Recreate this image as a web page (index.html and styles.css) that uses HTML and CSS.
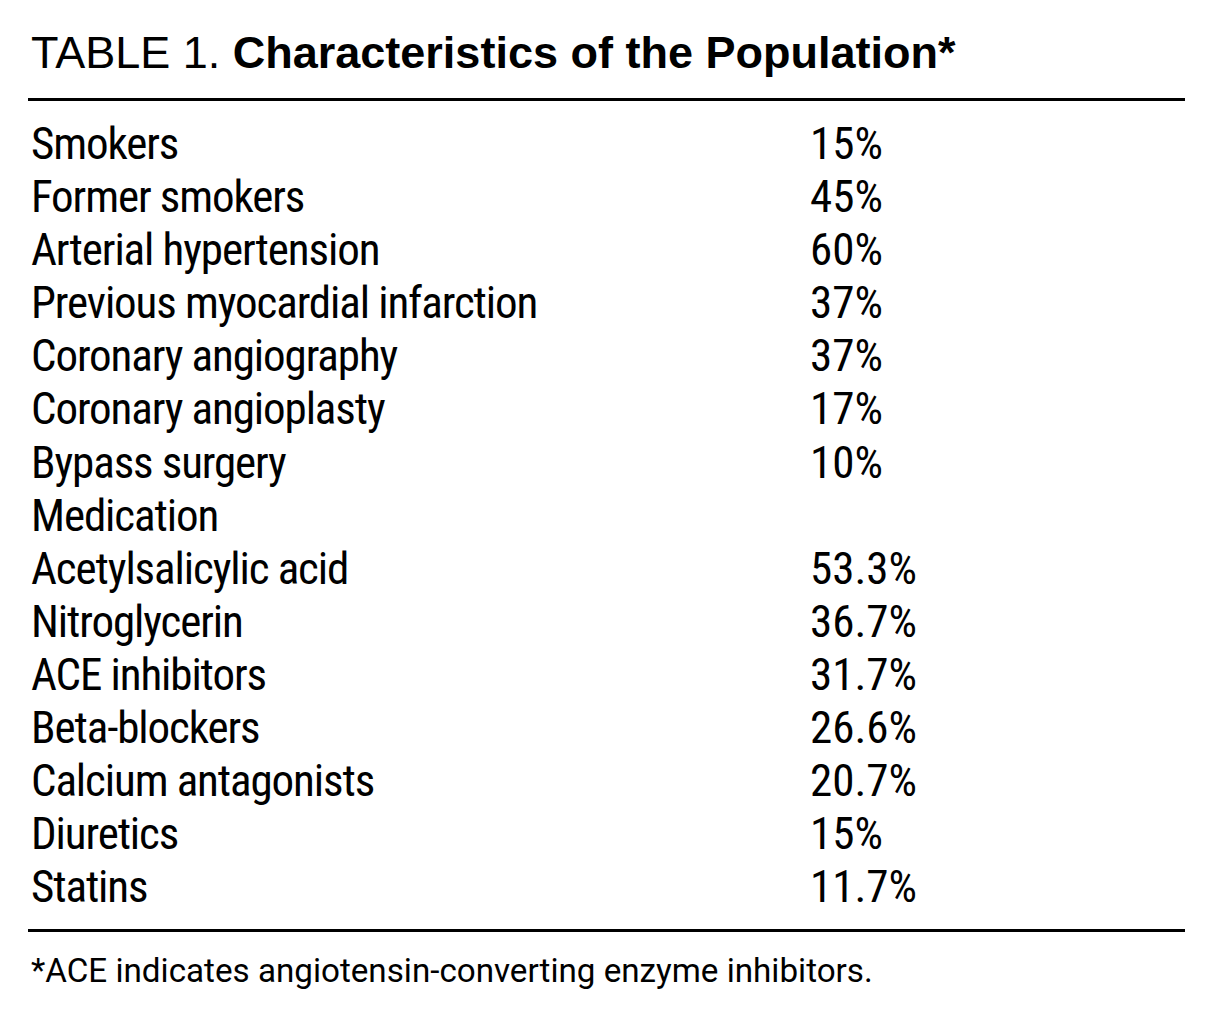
FILE: index.html
```html
<!DOCTYPE html>
<html>
<head>
<meta charset="utf-8">
<link rel="stylesheet" href="styles.css">
</head>
<body>
<div class="page">
  <h1 class="title">TABLE 1. <b>Characteristics of the Population*</b></h1>
  <div class="table">
    <div class="row"><span class="label">Smokers</span><span class="val">15%</span></div>
    <div class="row"><span class="label">Former smokers</span><span class="val">45%</span></div>
    <div class="row"><span class="label">Arterial hypertension</span><span class="val">60%</span></div>
    <div class="row"><span class="label">Previous myocardial infarction</span><span class="val">37%</span></div>
    <div class="row"><span class="label">Coronary angiography</span><span class="val">37%</span></div>
    <div class="row"><span class="label">Coronary angioplasty</span><span class="val">17%</span></div>
    <div class="row"><span class="label">Bypass surgery</span><span class="val">10%</span></div>
    <div class="row"><span class="label">Medication</span><span class="val"></span></div>
    <div class="row"><span class="label">Acetylsalicylic acid</span><span class="val">53.3%</span></div>
    <div class="row"><span class="label">Nitroglycerin</span><span class="val">36.7%</span></div>
    <div class="row"><span class="label">ACE inhibitors</span><span class="val">31.7%</span></div>
    <div class="row"><span class="label">Beta-blockers</span><span class="val">26.6%</span></div>
    <div class="row"><span class="label">Calcium antagonists</span><span class="val">20.7%</span></div>
    <div class="row"><span class="label">Diuretics</span><span class="val">15%</span></div>
    <div class="row"><span class="label">Statins</span><span class="val">11.7%</span></div>
  </div>
  <p class="note">*ACE indicates angiotensin-converting enzyme inhibitors.</p>
</div>
</body>
</html>
```

FILE: styles.css
```css
html, body {
  margin: 0;
  padding: 0;
  background: #fff;
}
body {
  font-family: "Roboto Condensed", Roboto, "Liberation Sans", sans-serif;
  font-stretch: 75%;
  color: #000;
}
.page {
  width: 1157px;
  margin-left: 28px;
  padding-top: 25px;
}
.title {
  margin: 0;
  padding-left: 3px;
  font-family: "Liberation Sans", Arial, sans-serif;
  font-stretch: normal;
  font-size: 45px;
  font-weight: normal;
  line-height: 56px;
  padding-bottom: 17px;
  border-bottom: 3px solid #000;
}
.title b {
  font-weight: bold;
}
.table {
  padding-top: 16px;
  padding-bottom: 16px;
  border-bottom: 3px solid #000;
}
.row {
  display: grid;
  grid-template-columns: 779px 1fr;
  font-size: 45px;
  line-height: 53.1px;
  padding-left: 3px;
}
.label {
  letter-spacing: -1.1px;
}
.val {
  letter-spacing: 0;
}
.note {
  margin: 0;
  padding-top: 20px;
  padding-left: 3px;
  font-family: Roboto, "Liberation Sans", sans-serif;
  font-stretch: 100%;
  font-size: 33.2px;
  line-height: 38px;
}
```
